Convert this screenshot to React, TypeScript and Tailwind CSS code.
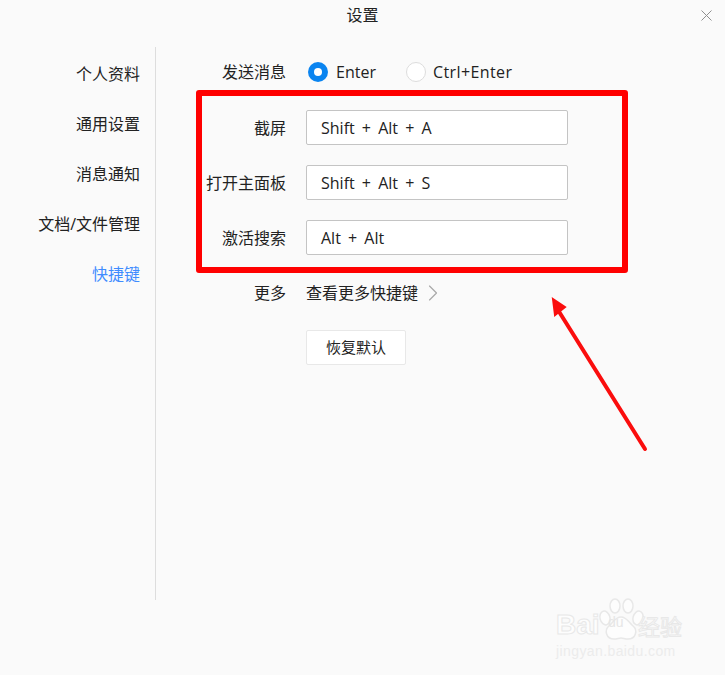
import { ChevronRight } from "lucide-react"

const menu = ["个人资料", "通用设置", "消息通知", "文档/文件管理"]

const shortcuts = [
  { label: "截屏", value: "Shift + Alt + A" },
  { label: "打开主面板", value: "Shift + Alt + S" },
  { label: "激活搜索", value: "Alt + Alt" },
]

function Watermark() {
  return (
    <div className="absolute left-[556px] top-[598px] w-[140px]">
      <svg className="absolute left-[40px] top-0" width="50" height="46" viewBox="0 0 50 46" fill="#fdfdfd" stroke="#e8e8e8" strokeWidth="1.5">
        <ellipse cx="9" cy="20" rx="5" ry="7" transform="rotate(-15 9 20)" />
        <ellipse cx="19" cy="8" rx="5" ry="7" />
        <ellipse cx="32" cy="8" rx="5" ry="7" />
        <ellipse cx="42" cy="20" rx="5" ry="7" transform="rotate(15 42 20)" />
        <path d="M25 19c6 0 8 6 12 9 5 4 3 13-5 13-3 0-5-1-7-1s-4 1-7 1c-8 0-10-9-5-13 4-3 6-9 12-9z" />
      </svg>
      <div className="relative flex h-[42px] items-end font-['Liberation_Sans',sans-serif] text-[28px] font-bold leading-[30px] text-[#fdfdfd] [-webkit-text-stroke:1px_#e8e8e8]">
        <span className="w-[52px]">Bai</span>
        <span className="relative top-[-3px] w-[30px] text-[14px] font-normal text-[#e6e6e6] [-webkit-text-stroke:0px]">du</span>
        <span className="font-['Noto_Sans_CJK_SC',sans-serif] text-[22px] font-normal">经验</span>
      </div>
      <div className="mt-[3px] font-['Liberation_Sans',sans-serif] text-[14px] leading-[16px] tracking-[0.4px] text-[#ececec]">
        jingyan.baidu.com
      </div>
    </div>
  )
}

export default function App() {
  return (
    <div className="relative h-[675px] w-[725px] overflow-hidden bg-[#fafafa] font-['Open_Sans','Noto_Sans_CJK_SC',sans-serif] text-[16px] text-[#222222]">
      {/* title bar */}
      <div className="relative flex h-[30px] items-center justify-center">
        <span>设置</span>
        <svg className="absolute right-[13px] top-[10px]" width="11" height="11" viewBox="0 0 11 11" stroke="#8f8f8f" strokeWidth="1" fill="none">
          <path d="M0.5 0.5l10 10M10.5 0.5l-10 10" />
        </svg>
      </div>

      <div className="mt-[17px] flex">
        {/* sidebar */}
        <div className="flex h-[553px] w-[156px] flex-col items-end gap-[28px] border-r border-[#dddddd] pr-[15px] pt-[16px]">
          {menu.map((item) => (
            <div key={item} className="h-[22px] leading-[22px]">
              {item}
            </div>
          ))}
          <div className="h-[22px] leading-[22px] text-[#3f8cff]">快捷键</div>
        </div>

        {/* content */}
        <div className="flex flex-col">
          <div className="flex h-[50px] items-center">
            <div className="w-[130px] text-right">发送消息</div>
            <div className="ml-[22px] flex items-center">
              <div className="flex size-[20px] items-center justify-center rounded-full bg-[#0a84f0]">
                <div className="size-[8px] rounded-full bg-white" />
              </div>
              <span className="ml-[8px]">Enter</span>
              <div className="ml-[30px] size-[20px] rounded-full border border-[#dddddd] bg-white" />
              <span className="ml-[7px] tracking-[0.4px]">Ctrl+Enter</span>
            </div>
          </div>

          <div className="mt-[13px] flex flex-col gap-[20px]">
            {shortcuts.map((row) => (
              <div key={row.label} className="flex items-center">
                <div className="w-[130px] text-right">{row.label}</div>
                <div className="ml-[20px] flex h-[35px] w-[262px] items-center whitespace-pre rounded-[2px] border border-[#c4c4c4] bg-white pl-[14px] [word-spacing:3px]">
                  {row.value}
                </div>
              </div>
            ))}
          </div>

          <div className="mt-[27px] flex h-[22px] items-center">
            <div className="w-[130px] text-right">更多</div>
            <div className="ml-[20px]">查看更多快捷键</div>
            <ChevronRight className="ml-[1px] size-[28px] shrink-0 text-[#a8a8a8]" strokeWidth={1} />
          </div>

          <button className="ml-[150px] mt-[26px] h-[35px] w-[100px] rounded-[2px] border border-[#e8e8e8] bg-white text-[15px]">
            恢复默认
          </button>
        </div>
      </div>

      {/* red annotation */}
      <div className="absolute left-[196px] top-[90px] h-[183px] w-[432px] rounded-[3px] border-[6px] border-[#ff0000]" />
      <svg className="absolute left-[540px] top-[290px]" width="120" height="170" viewBox="0 0 120 170" fill="none">
        <path d="M105 159L18 20" stroke="#fa0d0d" strokeWidth="4" strokeLinecap="round" />
        <path d="M13 9L25 17L15 25Z" fill="#fa0d0d" stroke="#fa0d0d" strokeWidth="2" />
      </svg>

      <Watermark />
    </div>
  )
}
